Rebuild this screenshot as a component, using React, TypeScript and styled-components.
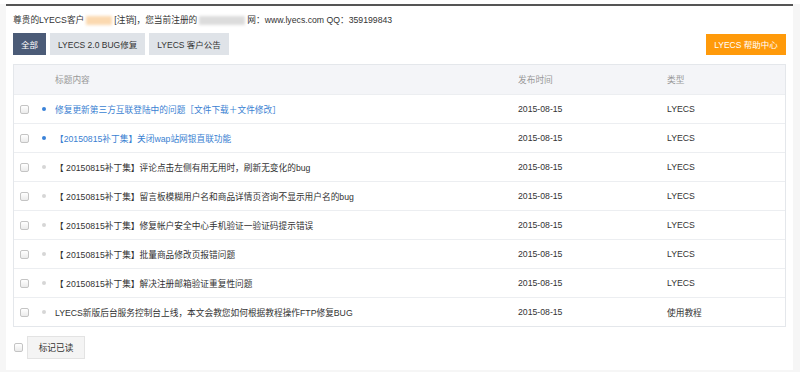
import React from "react";
import styled, {createGlobalStyle} from "styled-components";

const GlobalStyle = createGlobalStyle`
  html, body {
    margin: 0;
    padding: 0;
    background: #fff;
  }
  body {
    font-family: "Liberation Sans", "Noto Sans CJK SC", sans-serif;
    font-size: 8.7px;
    color: #333;
  }
`

const Shell = styled.div`
  margin-top: 4px;
  padding: 0 7px 0 6px;
  background: #f6f6f6;
  min-height: 368px;
`

const Panel = styled.div`
  background: #fff;
  border-top: 2px solid #555;
  padding: 6px 7px 0 7px;
  min-height: 366px;
  box-sizing: border-box;
`

const Welcome = styled.div`
  line-height: 16px;
  height: 16px;
  display: flex;
  align-items: center;
  white-space: nowrap;
`

const Blur = styled.span<{ $w: number, $tone: string }>`
  display: inline-block;
  width: ${props => props.$w}px;
  height: 9px;
  margin: 0 2px;
  background: ${props => props.$tone};
  filter: blur(1.5px);
`

const Toolbar = styled.div`
  display: flex;
  align-items: center;
  gap: 4px;
  margin-top: 5px;
  height: 22px;
`

const TabBtn = styled.button<{ $active?: boolean }>`
  height: 22px;
  padding: 0 8px;
  border: none;
  font: inherit;
  font-size: 8.5px;
  color: ${props => props.$active ? '#fff' : '#333'};
  background: ${props => props.$active ? '#4b5b77' : '#dfe3e8'};
  cursor: pointer;
`

const HelpBtn = styled.button`
  margin-left: auto;
  height: 21px;
  width: 80px;
  border: none;
  font: inherit;
  font-size: 8.5px;
  color: #fff;
  background: #ff9a0a;
  cursor: pointer;
`

const Table = styled.div`
  margin-top: 9px;
  border: 1px solid #e4e7eb;
`

const Row = styled.div<{ $head?: boolean }>`
  display: grid;
  grid-template-columns: 22px 13px 463px 149px 1fr;
  align-items: center;
  height: 29px;
  padding-left: 6px;
  background: ${props => props.$head ? '#f4f5f8' : '#fff'};
  color: ${props => props.$head ? '#999' : '#333'};
  border-top: ${props => props.$head ? 'none' : '1px solid #eceef1'};
  box-sizing: border-box;
  white-space: nowrap;
`

const Check = styled.input.attrs({type: 'checkbox'})`
  appearance: none;
  margin: 0;
  width: 9px;
  height: 9px;
  border: 1px solid #c4c4c4;
  border-radius: 2px;
  background: linear-gradient(#fff, #ebebeb);
  box-sizing: border-box;
`

const Dot = styled.span<{ $unread?: boolean }>`
  width: 4px;
  height: 4px;
  border-radius: 50%;
  background: ${props => props.$unread ? '#3a82d8' : '#d6d6d6'};
`

const Title = styled.a<{ $unread?: boolean }>`
  color: ${props => props.$unread ? '#3a7fd2' : '#333'};
  text-decoration: none;
`

const Footer = styled.div`
  display: flex;
  align-items: center;
  gap: 4px;
  margin-top: 9px;
  margin-left: 1px;
`

const MarkBtn = styled.button`
  height: 23px;
  width: 58px;
  border: 1px solid #e3e3e3;
  background: #f4f4f4;
  font: inherit;
  font-size: 8.7px;
  color: #333;
`

type Notice = {
    id: number,
    title: string,
    date: string,
    kind: string,
    unread: boolean
}

const notices: Notice[] = [
    {id: 1, title: '修复更新第三方互联登陆中的问题［文件下载＋文件修改］', date: '2015-08-15', kind: 'LYECS', unread: true},
    {id: 2, title: '【20150815补丁集】关闭wap站网银直联功能', date: '2015-08-15', kind: 'LYECS', unread: true},
    {id: 3, title: '【 20150815补丁集】评论点击左侧有用无用时，刷新无变化的bug', date: '2015-08-15', kind: 'LYECS', unread: false},
    {id: 4, title: '【 20150815补丁集】留言板模糊用户名和商品详情页咨询不显示用户名的bug', date: '2015-08-15', kind: 'LYECS', unread: false},
    {id: 5, title: '【 20150815补丁集】修复帐户安全中心手机验证一验证码提示错误', date: '2015-08-15', kind: 'LYECS', unread: false},
    {id: 6, title: '【 20150815补丁集】批量商品修改页报错问题', date: '2015-08-15', kind: 'LYECS', unread: false},
    {id: 7, title: '【 20150815补丁集】解决注册邮箱验证重复性问题', date: '2015-08-15', kind: 'LYECS', unread: false},
    {id: 8, title: 'LYECS新版后台服务控制台上线，本文会教您如何根据教程操作FTP修复BUG', date: '2015-08-15', kind: '使用教程', unread: false},
]

export default function App() {
    return (
        <>
            <GlobalStyle/>
            <Shell>
                <Panel>
                    <Welcome>
                        尊贵的LYECS客户<Blur $w={26} $tone={'#fbd9b0'}/>[注销]，您当前注册的<Blur $w={46} $tone={'#dcdcdc'}/>网：www.lyecs.com QQ：359199843
                    </Welcome>
                    <Toolbar>
                        <TabBtn $active>全部</TabBtn>
                        <TabBtn>LYECS 2.0 BUG修复</TabBtn>
                        <TabBtn>LYECS 客户公告</TabBtn>
                        <HelpBtn>LYECS 帮助中心</HelpBtn>
                    </Toolbar>
                    <Table>
                        <Row $head>
                            <span/>
                            <span/>
                            <span>标题内容</span>
                            <span>发布时间</span>
                            <span>类型</span>
                        </Row>
                        {notices.map(n => (
                            <Row key={n.id}>
                                <Check/>
                                <Dot $unread={n.unread}/>
                                <Title href="#" $unread={n.unread}>{n.title}</Title>
                                <span>{n.date}</span>
                                <span>{n.kind}</span>
                            </Row>
                        ))}
                    </Table>
                    <Footer>
                        <Check/>
                        <MarkBtn>标记已读</MarkBtn>
                    </Footer>
                </Panel>
            </Shell>
        </>
    );
}
